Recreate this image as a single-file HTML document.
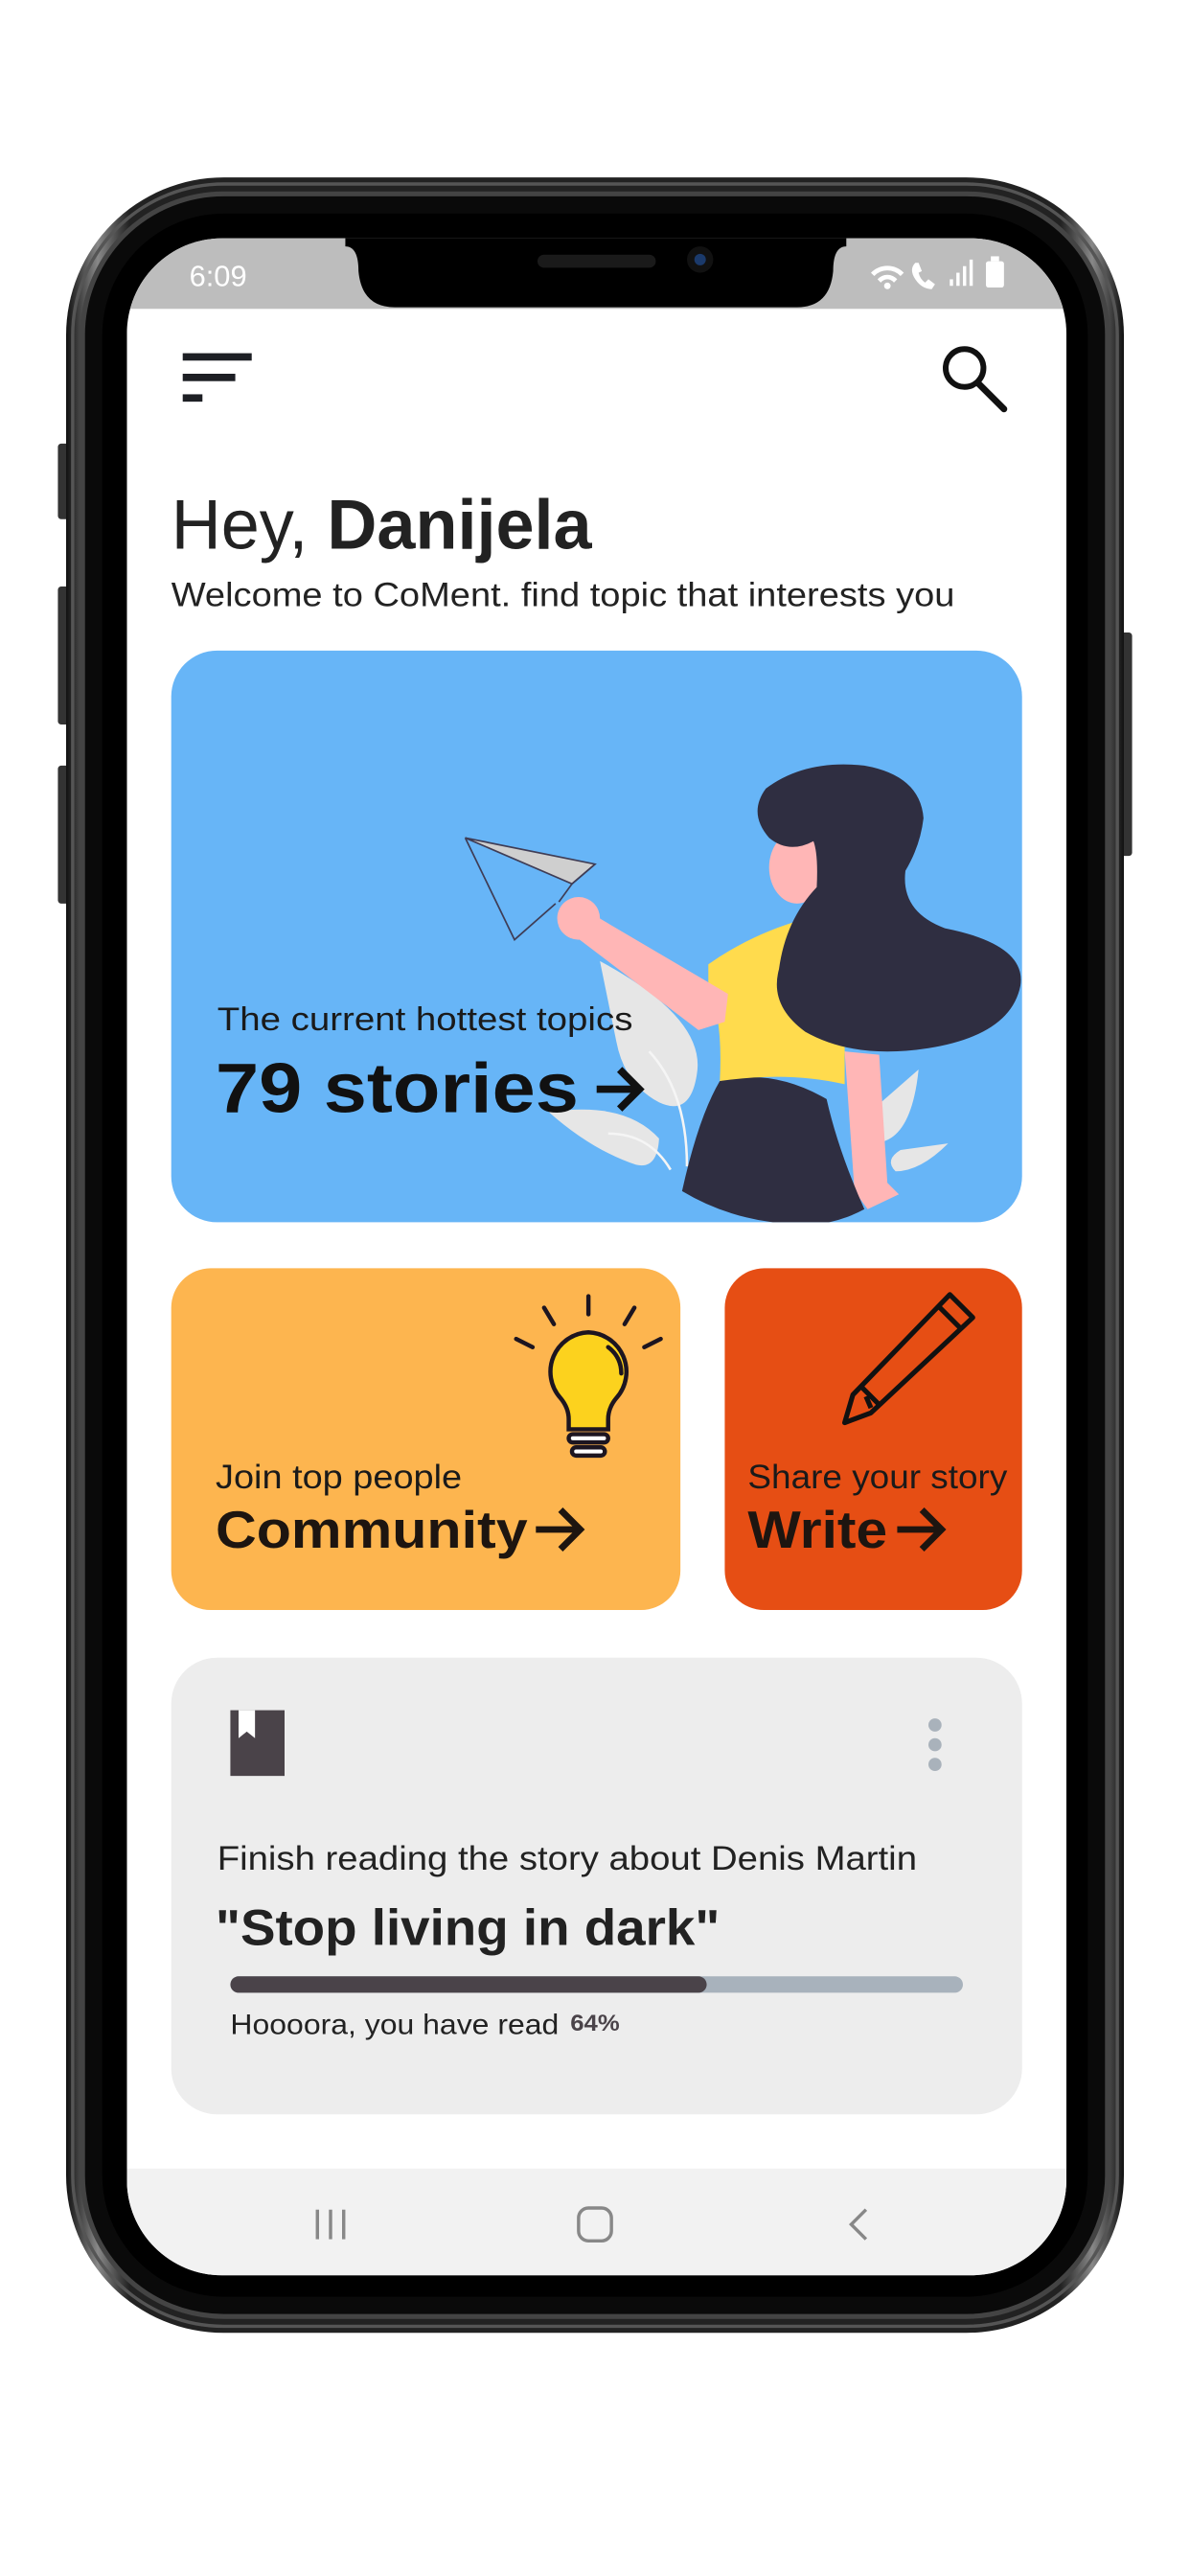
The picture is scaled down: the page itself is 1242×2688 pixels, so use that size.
<!DOCTYPE html>
<html><head><meta charset="utf-8"><style>
html,body{margin:0;padding:0;background:#fff;width:1242px;height:2688px;overflow:hidden}
svg{display:block}
text{font-family:"Liberation Sans",sans-serif}
</style></head><body>
<svg width="1242" height="2688" viewBox="0 0 724 1568" xmlns="http://www.w3.org/2000/svg">
<defs>
<linearGradient id="fr" x1="0" y1="0" x2="1" y2="0">
<stop offset="0" stop-color="#111"/><stop offset="0.03" stop-color="#888"/><stop offset="0.06" stop-color="#222"/>
<stop offset="0.94" stop-color="#222"/><stop offset="0.97" stop-color="#888"/><stop offset="1" stop-color="#111"/>
</linearGradient>
<clipPath id="scr"><rect x="77" y="145" width="572" height="1240" rx="58"/></clipPath>
<clipPath id="card"><rect x="104" y="396" width="518" height="348" rx="28"/></clipPath>
</defs>
<rect x="35" y="270" width="8" height="46" rx="2" fill="#333"/>
<rect x="35" y="357" width="8" height="84" rx="2" fill="#333"/>
<rect x="35" y="466" width="8" height="84" rx="2" fill="#333"/>
<rect x="681" y="385" width="8" height="136" rx="2" fill="#333"/>
<rect x="40" y="108" width="644" height="1312" rx="96" fill="url(#fr)"/>
<rect x="44" y="112" width="636" height="1304" rx="92" fill="none" stroke="#555" stroke-width="2"/>
<rect x="50" y="118" width="624" height="1292" rx="86" fill="#0a0a0a" stroke="#444" stroke-width="3"/>
<rect x="62" y="130" width="600" height="1268" rx="74" fill="#000"/>
<g clip-path="url(#scr)">
<rect x="77" y="145" width="572" height="1240" fill="#fff"/>
<rect x="77" y="145" width="572" height="43" fill="#bdbdbd"/>
<path d="M210 140 H515 V150 Q507 150 507 165 Q505 187 485 187 H240 Q220 187 218 165 Q218 150 210 150 Z" fill="#000"/>
<rect x="77" y="1320" width="572" height="70" fill="#f2f2f2"/>
</g>
<rect x="327" y="155" width="72" height="8" rx="4" fill="#1a1a1a"/>
<circle cx="426" cy="158" r="8" fill="#111"/><circle cx="426" cy="158" r="3.5" fill="#1b3a6b"/>
<text x="115" y="174" font-size="18" fill="#fff">6:09</text>
<g fill="#fff">
<path d="M530 166 a14 14 0 0 1 20 0 l-2 2 a11 11 0 0 0 -16 0z M534 170 a8 8 0 0 1 12 0 l-2 2 a5 5 0 0 0 -8 0z"/>
<circle cx="540" cy="174" r="2"/>
<path d="M557 160 q-4 4 0 10 q4 6 10 6 l2 -3 l-4 -3 l-2 2 q-3 -2 -4 -6 l2 -1 l-2 -5z"/>
<rect x="578" y="170" width="2" height="4"/><rect x="582" y="166" width="2" height="8"/><rect x="586" y="162" width="2" height="12"/><rect x="590" y="158" width="2" height="16"/>
<rect x="600" y="159" width="11" height="16" rx="1.5"/><rect x="603" y="156" width="5" height="3"/>
</g>
<g fill="#1d1f24">
<rect x="111" y="215" width="42" height="4.5"/>
<rect x="111" y="227.5" width="32" height="4.5"/>
<rect x="111" y="240" width="12" height="4.5"/>
</g>
<circle cx="587" cy="224" r="11.5" fill="none" stroke="#111" stroke-width="3.5"/>
<line x1="595" y1="233" x2="611" y2="249" stroke="#111" stroke-width="4" stroke-linecap="round"/>
<text x="104" y="334" font-size="43" fill="#222" textLength="256" lengthAdjust="spacingAndGlyphs">Hey, <tspan font-weight="bold">Danijela</tspan></text>
<text x="104" y="369" font-size="20.5" fill="#222" textLength="477" lengthAdjust="spacingAndGlyphs">Welcome to CoMent. find topic that interests you</text>
<rect x="104" y="396" width="518" height="348" rx="28" fill="#67b5f7"/>
<g clip-path="url(#card)">
<path d="M365 585 Q430 620 424 654 Q420 680 401 671 Q380 660 375 634 Z" fill="#e6e6e6"/>
<path d="M334 677 Q380 670 401 693 Q400 712 387 709 Q360 700 334 677Z" fill="#e6e6e6"/>
<path d="M559 651 Q555 690 537 695 Q525 690 535 672 Z" fill="#e6e6e6"/>
<path d="M577 696 Q560 713 545 713 Q538 706 548 700 Z" fill="#e6e6e6"/>
<path d="M395 640 Q418 665 418 710 M370 690 Q395 690 408 712" stroke="#f5f5f5" stroke-width="1.5" fill="none"/>
<path d="M283 510 L362 526 L348 538 Z" fill="#cfcfcf" stroke="#3f3d56" stroke-width="1"/>
<path d="M283 510 L313 572 L338 550 M362 526 L348 538 L340 549" fill="none" stroke="#3f3d56" stroke-width="1"/>
<path d="M514 640 L535 642 L540 720 L547 727 L528 736 L520 725 Z" fill="#ffb6b6"/>
<path d="M438 658 Q470 650 503 669 Q510 700 526 736 Q500 750 470 744 Q440 740 415 725 Q425 680 438 658Z" fill="#2f2e41"/>
<path d="M431 587 Q455 570 484 561 L514 600 L514 660 Q480 652 438 658 Q440 620 431 600 Z" fill="#ffdb4d"/>
<path d="M358 555 L443 605 L441 622 L425 627 L350 570 Z" fill="#ffb6b6"/>
<circle cx="352" cy="559" r="13" fill="#ffb6b6"/>
<ellipse cx="485" cy="528" rx="17" ry="22" fill="#ffb6b6"/>
<path d="M466 480 Q490 462 526 466 Q560 472 562 498 Q560 515 551 530 Q548 555 575 565 Q625 575 621 600 Q615 630 565 638 Q520 645 490 628 Q468 612 474 590 Q478 560 497 540 Q498 520 495 512 Q480 520 468 510 Q455 495 466 480Z" fill="#2f2e41"/>
</g>
<text x="132" y="627" font-size="20" fill="#1a1a1a" textLength="253" lengthAdjust="spacingAndGlyphs">The current hottest topics</text>
<text x="131" y="677" font-size="43" font-weight="bold" fill="#111" textLength="221" lengthAdjust="spacingAndGlyphs">79 stories</text>
<path d="M363 663 H388 M377 651 L389 663 L377 675" fill="none" stroke="#111" stroke-width="4.5"/>
<rect x="104" y="772" width="310" height="208" rx="24" fill="#fdb54f"/>
<g stroke="#1d1520" stroke-width="2.6" stroke-linecap="round" fill="none">
<line x1="358" y1="789" x2="358" y2="800"/><line x1="331" y1="796" x2="337" y2="806"/><line x1="386" y1="796" x2="380" y2="806"/>
<line x1="314" y1="815" x2="324" y2="820"/><line x1="402" y1="815" x2="392" y2="820"/>
<path d="M358 811 a24 24 0 0 0 -17 40 q5 6 5 13 v6 h24 v-6 q0 -7 5 -13 a24 24 0 0 0 -17 -40z" fill="#fcd21e"/>
<path d="M370 820 q8 6 8 16"/>
<rect x="346" y="873" width="24" height="5" rx="2.5" fill="#fff"/>
<rect x="348" y="881" width="20" height="5" rx="2.5" fill="#fff"/>
</g>
<text x="131" y="906" font-size="20.5" fill="#1a1a1a" textLength="150" lengthAdjust="spacingAndGlyphs">Join top people</text>
<text x="131" y="942" font-size="32" font-weight="bold" fill="#1d1510" textLength="190" lengthAdjust="spacingAndGlyphs">Community</text>
<path d="M326 931 H352 M341 919 L353 931 L341 943" fill="none" stroke="#1d1510" stroke-width="4"/>
<rect x="441" y="772" width="181" height="208" rx="24" fill="#e64e14"/>
<g stroke="#111" stroke-width="3" fill="none" stroke-linejoin="round">
<path d="M578 788 L592 802 L530 860 L514 866 L519 849 Z"/>
<path d="M571 795 L585 809 M524 844 L535 855 M527 850 L530 857"/>
</g>
<text x="455" y="906" font-size="20.5" fill="#1a1a1a" textLength="158" lengthAdjust="spacingAndGlyphs">Share your story</text>
<text x="455" y="942" font-size="32" font-weight="bold" fill="#1d1510" textLength="85" lengthAdjust="spacingAndGlyphs">Write</text>
<path d="M546 931 H572 M561 919 L573 931 L561 943" fill="none" stroke="#1d1510" stroke-width="4"/>
<rect x="104" y="1009" width="518" height="278" rx="28" fill="#ededed"/>
<rect x="140" y="1041" width="33" height="40" fill="#4a4349"/>
<path d="M145 1041 V1058 L150 1054 L155 1058 V1041Z" fill="#fff"/>
<circle cx="569" cy="1050" r="4" fill="#a9b2bb"/><circle cx="569" cy="1062" r="4" fill="#a9b2bb"/><circle cx="569" cy="1074" r="4" fill="#a9b2bb"/>
<text x="132" y="1138" font-size="20.5" fill="#222" textLength="426" lengthAdjust="spacingAndGlyphs">Finish reading the story about Denis Martin</text>
<text x="131" y="1184" font-size="31" font-weight="bold" fill="#222" textLength="307" lengthAdjust="spacingAndGlyphs">"Stop living in dark"</text>
<rect x="140" y="1203" width="446" height="10" rx="5" fill="#a8b2bc"/>
<rect x="140" y="1203" width="290" height="10" rx="5" fill="#4a4349"/>
<text x="140" y="1238" font-size="17.5" fill="#222" textLength="200" lengthAdjust="spacingAndGlyphs">Hoooora, you have read</text>
<text x="347" y="1236" font-size="14" font-weight="bold" fill="#4a4349" textLength="30" lengthAdjust="spacingAndGlyphs">64%</text>
<g stroke="#888" stroke-width="2" fill="none">
<line x1="193" y1="1345" x2="193" y2="1363"/><line x1="201" y1="1345" x2="201" y2="1363"/><line x1="209" y1="1345" x2="209" y2="1363"/>
<rect x="352" y="1344" width="20" height="20" rx="6"/>
<path d="M527 1345 L518 1354 L527 1363"/>
</g>
</svg>
</body></html>
